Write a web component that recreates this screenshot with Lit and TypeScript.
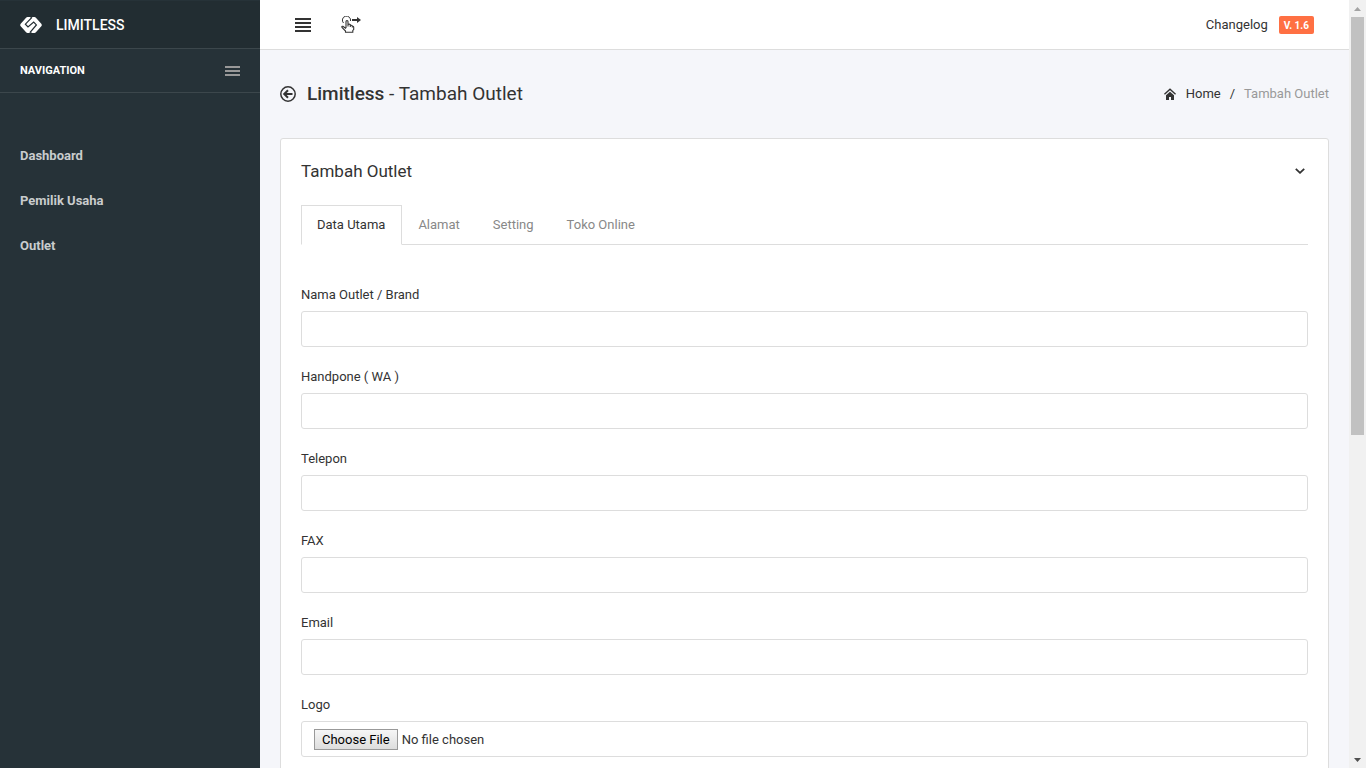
import { LitElement, html, css, svg } from 'lit';
import { customElement, state } from 'lit/decorators.js';

const FIELDS = [
  { id: 'nama', label: 'Nama Outlet / Brand', type: 'text' },
  { id: 'wa', label: 'Handpone ( WA )', type: 'text' },
  { id: 'telepon', label: 'Telepon', type: 'text' },
  { id: 'fax', label: 'FAX', type: 'text' },
  { id: 'email', label: 'Email', type: 'email' },
  { id: 'logo', label: 'Logo', type: 'file' },
];
const TABS = ['Data Utama', 'Alamat', 'Setting', 'Toko Online'];
const MENU = ['Dashboard', 'Pemilik Usaha', 'Outlet'];

const bars = (width: number, count: number) => html`<svg width=${width} height=${count * 4 - 2} aria-hidden="true">
  ${Array.from({ length: count }, (_, i) => svg`<rect x="0" y=${i * 4} width=${width} height="2" fill="currentColor" />`)}
</svg>`;

const logoIcon = html`<svg width="22" height="16" viewBox="0 0 22 16" aria-hidden="true">
  <path d="M7.500 0h2.300l1.200.7L12.300 0h2.200q.8 0 1.400.7l5.400 6q1 1.300 0 2.600l-5.400 6q-.6.7-1.400.7h-2.300l-1.200-.7-1.300.7H7.500q-.8 0-1.400-.7l-5.400-6q-1-1.300 0-2.600l5.400-6Q6.700 0 7.500 0z" fill="#fff" />
  <path d="M12 .3 5.400 7.200 8 9.900 13.700 5 16.400 7.900 9.800 15.700" fill="none" stroke="#222d32" stroke-width="1.200" />
</svg>`;

const touchIcon = html`<svg width="20" height="17" viewBox="0 0 20 17" fill="none" stroke="currentColor" aria-hidden="true">
  <path d="M2.500 7A4.100 4.100 0 1 1 9.500 5" />
  <path d="M5 12V5.500q0-1 1-1t1 1V10.500V8.500q1.300-.8 2.300.2V11V9.500q1.200-.6 2 .3V11.500V10.400q1.400-.4 1.400.8v2.300l-.9 1V16.300H4.500V15L1 11.500q-.6-1.500.9-1.200L5 12.500" stroke-width="1.100" />
  <path d="M11 4h6" stroke-width="2" />
  <path d="M16 1l4 3-4 3z" fill="currentColor" stroke="none" />
</svg>`;

const backIcon = html`<svg width="16" height="16" viewBox="0 0 16 16" fill="none" stroke="currentColor" aria-hidden="true">
  <circle cx="8" cy="8" r="7.200" stroke-width="1.500" />
  <path d="M12.500 8H5M8 4.200 4.200 8 8 11.800" stroke-width="2" />
</svg>`;

const homeIcon = html`<svg width="12" height="12" viewBox="0 0 12 12" aria-hidden="true">
  <path d="M.4 6.300 6 1.300l5.600 5" fill="none" stroke="currentColor" stroke-width="1.500" />
  <path d="M2 7.200 6 3.700l4 3.500V12H7V9H5v3H2z" fill="currentColor" />
</svg>`;

const chevronIcon = html`<svg width="10" height="6" viewBox="0 0 10 6" aria-hidden="true">
  <path d="M.8.800 5 4.800 9.200.800" fill="none" stroke="currentColor" stroke-width="1.800" />
</svg>`;

@customElement('app-root')
export class AppRoot extends LitElement {
  @state() private activeTab = 0;

  static styles = css`
    :host {
      display: flex;
      height: 100vh;
      overflow: hidden;
      background: #f5f6fa;
      color: #333;
      font: 13px/20px Roboto, 'Liberation Sans', sans-serif;
    }
    * { box-sizing: border-box; }
    a { color: inherit; text-decoration: none; }
    svg { display: block; flex: none; }
    button {
      font: inherit;
      color: inherit;
      background: none;
      border: 0;
      padding: 0;
      cursor: pointer;
    }
    h1, h2, ul, ol { margin: 0; padding: 0; font-weight: 400; list-style: none; }

    .sidebar { flex: 0 0 260px; background: #263238; color: #fff; }
    .brand {
      display: flex;
      align-items: center;
      gap: 14px;
      height: 49px;
      padding: 0 20px;
      background: #222d32;
      border-top: 1px solid #263238;
      border-bottom: 1px solid #3c474c;
      font-size: 14px;
      font-weight: 500;
    }
    .nav-head {
      display: flex;
      align-items: center;
      justify-content: space-between;
      height: 44px;
      padding: 0 20px;
      border-bottom: 1px solid #3c474c;
      font-size: 11px;
      line-height: 21px;
      font-weight: 700;
    }
    .nav-toggle { color: #999; }
    .menu { padding-top: 40px; }
    .menu-link {
      display: block;
      padding: 13px 20px 12px;
      color: #c9cccd;
      font-weight: 700;
    }

    .page { flex: 1; min-width: 0; }
    .topbar {
      display: flex;
      align-items: center;
      gap: 30px;
      height: 50px;
      padding: 0 35px;
      background: #fff;
      border-bottom: 1px solid #ddd;
    }
    .changelog { display: flex; align-items: center; gap: 11px; margin-left: auto; }
    .version {
      padding: 1px 5px 0;
      border-radius: 2px;
      background: #ff7043;
      color: #fff;
      font-size: 10px;
      font-weight: 700;
      line-height: 17px;
    }
    .page-head {
      display: flex;
      align-items: center;
      justify-content: space-between;
      height: 88px;
      padding: 0 20px;
    }
    .page-title { display: flex; align-items: center; gap: 11px; font-size: 19px; line-height: 28px; }
    .page-title strong { font-weight: 500; }
    .crumbs { display: flex; align-items: center; gap: 9px; }
    .crumb-home { display: flex; align-items: center; gap: 10px; }
    .crumb-current { color: #999; }

    .card {
      margin: 0 20px;
      padding: 20px;
      background: #fff;
      border: 1px solid #ddd;
      border-radius: 3px;
    }
    .card-head {
      display: flex;
      align-items: center;
      justify-content: space-between;
      padding-right: 3px;
      margin-bottom: 22px;
    }
    .card-title { font-size: 17px; line-height: 24px; }
    .tabs { display: flex; height: 40px; border-bottom: 1px solid #ddd; margin-bottom: 40px; }
    .tab {
      height: 40px;
      padding: 0 16px 0 15px;
      border: 1px solid transparent;
      color: #888;
    }
    .tab.active {
      border-color: #ddd;
      border-bottom-color: #fff;
      background: #fff;
      color: #333;
    }
    .fields { display: grid; gap: 20px; }
    .field { display: grid; gap: 6px; }
    .control {
      width: 100%;
      height: 36px;
      padding: 7px 12px;
      border: 1px solid #ddd;
      border-radius: 3px;
      background: #fff;
      color: #333;
      font: inherit;
    }
    .control::file-selector-button {
      height: 21px;
      margin: 0 4px 0 0;
      padding: 0 7px;
      border: 1px solid #999;
      border-radius: 0;
      background: linear-gradient(#f6f6f6, #ddd);
      color: #000;
      font: 13px/19px Roboto, 'Liberation Sans', sans-serif;
    }

    .scrollbar {
      flex: 0 0 17px;
      display: flex;
      flex-direction: column;
      align-items: center;
      background: #f1f1f1;
    }
    .arrow { display: grid; place-items: center; height: 17px; color: #a3a3a3; }
    .arrow.down { color: #505050; }
    .track { flex: 1; }
    .thumb { width: 13px; height: 57%; background: #c1c1c1; }
  `;

  render() {
    return html`
      <aside class="sidebar">
        <a class="brand" href="#">${logoIcon}<span>LIMITLESS</span></a>
        <div class="nav-head">
          <span>NAVIGATION</span>
          <button class="nav-toggle" aria-label="Toggle navigation">${bars(15, 3)}</button>
        </div>
        <ul class="menu">
          ${MENU.map((item) => html`<li><a class="menu-link" href="#">${item}</a></li>`)}
        </ul>
      </aside>
      <main class="page">
        <header class="topbar">
          <button aria-label="Collapse sidebar">${bars(16, 4)}</button>
          <button aria-label="Swipe">${touchIcon}</button>
          <a class="changelog" href="#">Changelog <span class="version">V. 1.6</span></a>
        </header>
        <div class="page-head">
          <h1 class="page-title">
            <a href="#" aria-label="Back">${backIcon}</a>
            <span><strong>Limitless</strong> - Tambah Outlet</span>
          </h1>
          <ol class="crumbs">
            <li><a class="crumb-home" href="#">${homeIcon}Home</a></li>
            <li>/</li>
            <li class="crumb-current">Tambah Outlet</li>
          </ol>
        </div>
        <section class="card">
          <div class="card-head">
            <h2 class="card-title">Tambah Outlet</h2>
            <button aria-label="Collapse">${chevronIcon}</button>
          </div>
          <div class="tabs" role="tablist">
            ${TABS.map((tab, i) => html`<button
              class="tab ${i === this.activeTab ? 'active' : ''}"
              role="tab"
              aria-selected=${i === this.activeTab}
              @click=${() => (this.activeTab = i)}
            >${tab}</button>`)}
          </div>
          <form class="fields">
            ${FIELDS.map((f) => html`<div class="field">
              <label for=${f.id}>${f.label}</label>
              <input class="control" id=${f.id} type=${f.type} />
            </div>`)}
          </form>
        </section>
      </main>
      <div class="scrollbar" aria-hidden="true">
        <div class="arrow"><svg width="7" height="4"><path d="M0 4h7L3.500 0z" fill="currentColor" /></svg></div>
        <div class="track"><div class="thumb"></div></div>
        <div class="arrow down"><svg width="7" height="4"><path d="M0 0h7L3.500 4z" fill="currentColor" /></svg></div>
      </div>
    `;
  }
}
